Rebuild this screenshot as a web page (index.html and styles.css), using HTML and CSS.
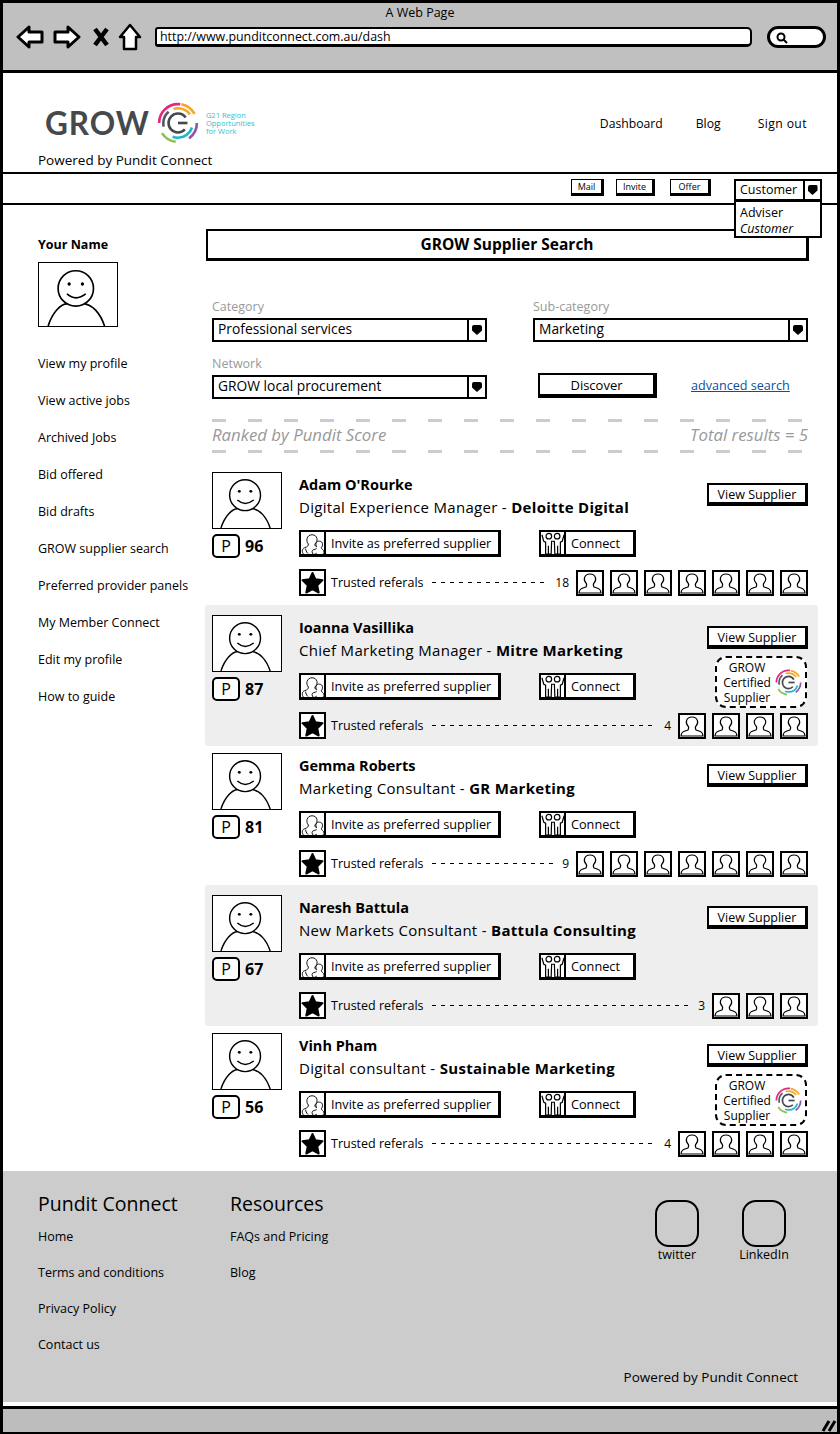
FILE: index.html
```html
<!DOCTYPE html>
<html lang="en">
<head>
<meta charset="UTF-8" />
<meta name="viewport" content="width=device-width, initial-scale=1.0" />
<title>A Web Page</title>
<link rel="stylesheet" href="styles.css">
</head>
<body>

<!-- shared icons -->
<svg class="defs" width="0" height="0" aria-hidden="true">
  <symbol id="face" viewBox="0 0 70 57">
    <circle cx="33" cy="23" r="16" fill="none" stroke="#000" stroke-width="1.5"/>
    <circle cx="27" cy="19" r="1.5"/>
    <circle cx="39" cy="19" r="1.5"/>
    <path d="M25 28 Q33 35 42 28" fill="none" stroke="#000" stroke-width="1.5"/>
    <path d="M8 57 C12 44 20 37 25 37 M41 37 C48 38 55 45 59 57" fill="none" stroke="#000" stroke-width="1.5"/>
  </symbol>
  <symbol id="member" viewBox="0 0 24 22">
    <path d="M1 21 C1 17 4 16 8 15 C9 13 9 12 8 11 C5 8 6 2 12 2 C18 2 19 8 16 11 C15 12 15 13 16 15 C20 16 23 17 23 21 Z" fill="none" stroke="#000" stroke-width="1.200"/>
  </symbol>
  <symbol id="star" viewBox="0 0 24 24">
    <path d="M12 2 L15 8.500 L22.500 9.500 L17 15 L18.500 22.500 L12 19 L5.500 22.500 L7 15 L1.500 9.500 L9 8.500 Z" stroke="#000" stroke-width="2" stroke-linejoin="round"/>
  </symbol>
  <symbol id="group" viewBox="0 0 26 26">
    <g fill="none" stroke="#000" stroke-width="1">
      <path d="M8 13 C5 10 6 3 12 3 C18 3 19 10 15 13 C15 15 16 16 17 16"/>
      <path d="M8 13 C8 15 7 16 4 17 C1 18 1 21 2 23 C3 25 6 25 8 24 C10 25 15 25 17 23"/>
      <path d="M17 16 C15 13 17 9 20 10 C24 10 24 15 22 17 C22 19 25 19 25 22 C25 25 20 25 17 25 C14 25 12 24 12 21 C12 19 15 19 17 18"/>
      <path d="M5 18 C5 20 6 21 7 23"/>
    </g>
  </symbol>
  <symbol id="pair" viewBox="0 0 26 26">
    <g fill="none" stroke="#000" stroke-width="1.300">
      <circle cx="8.500" cy="4.500" r="3"/>
      <circle cx="17.500" cy="4.500" r="3"/>
      <path d="M1 3 L3 10 L5 11 L5 24 L11 24 L11.500 10 L14.500 10 L15 24 L21 24 L21 11 L23 10 L25 3"/>
      <path d="M8 15 L8 24 M18 15 L18 24"/>
    </g>
  </symbol>
  <symbol id="ring" viewBox="0 0 40 40">
    <g fill="none" stroke-width="2.500">
      <circle cx="20" cy="20" r="18" pathLength="100" stroke="#e6267c" stroke-dasharray="27 73" stroke-dashoffset="-50"/>
      <circle cx="20" cy="20" r="18" pathLength="100" stroke="#f7a823" stroke-dasharray="14 86" stroke-dashoffset="-78"/>
      <circle cx="20" cy="20" r="18" pathLength="100" stroke="#8e56a8" stroke-dasharray="15 85" stroke-dashoffset="0"/>
      <circle cx="20" cy="20" r="18" pathLength="100" stroke="#8cc152" stroke-dasharray="14 86" stroke-dashoffset="-27"/>
      <circle cx="20" cy="20" r="14" pathLength="100" stroke="#21b6cf" stroke-dasharray="26 74" stroke-dashoffset="-5"/>
      <circle cx="20" cy="20" r="14" pathLength="100" stroke="#f7a823" stroke-dasharray="20 80" stroke-dashoffset="-70"/>
      <circle cx="20" cy="20" r="14" pathLength="100" stroke="#555a60" stroke-dasharray="18 82" stroke-dashoffset="-46"/>
      <circle cx="20" cy="20" r="9" pathLength="100" stroke="#45494e" stroke-dasharray="78 22" stroke-dashoffset="-12"/>
      <path d="M20 20 H29" stroke="#45494e"/>
    </g>
  </symbol>
</svg>

<div class="window">

  <!-- browser bar -->
  <div class="chrome">
    <div class="chrome-title">A Web Page</div>
    <div class="chrome-tools">
      <svg class="tool" width="28" height="26" viewBox="0 0 28 26"><path d="M2 13 L13 3 L13 8 L26 8 L26 18 L13 18 L13 23 Z" fill="#fff" stroke="#000" stroke-width="3" stroke-linejoin="round"/></svg>
      <svg class="tool" width="28" height="26" viewBox="0 0 28 26"><path d="M26 13 L15 3 L15 8 L2 8 L2 18 L15 18 L15 23 Z" fill="#fff" stroke="#000" stroke-width="3" stroke-linejoin="round"/></svg>
      <svg class="tool tool-x" width="16" height="20" viewBox="0 0 16 20"><path d="M2 2 L14 18 M14 2 L2 18" stroke="#000" stroke-width="4.500"/></svg>
      <svg class="tool tool-home" width="24" height="28" viewBox="0 0 24 28"><path d="M12 2 L22 14 L18 14 L18 26 L6 26 L6 14 L2 14 Z" fill="#fff" stroke="#000" stroke-width="2.500" stroke-linejoin="round"/></svg>
      <div class="url">http://www.punditconnect.com.au/dash</div>
      <div class="search">
        <svg width="12" height="12" viewBox="0 0 12 12"><circle cx="5" cy="5" r="3.500" fill="none" stroke="#000" stroke-width="2"/><path d="M7.500 7.500 L11 11" stroke="#000" stroke-width="2"/></svg>
      </div>
    </div>
  </div>

  <!-- site header -->
  <header class="site-head">
    <div class="brand">
      <div class="logo">
        <span class="logo-word">GROW</span>
        <svg class="logo-ring" width="42" height="42"><use href="#ring"/></svg>
        <span class="logo-sub">G21 Region<br>Opportunities<br>for Work</span>
      </div>
      <div class="powered">Powered by Pundit Connect</div>
    </div>
    <nav class="site-nav">
      <a href="#dashboard">Dashboard</a>
      <a href="#blog">Blog</a>
      <a href="#signout">Sign out</a>
    </nav>
  </header>

  <div class="toolbar">
    <button class="mini mini-mail">Mail</button>
    <button class="mini mini-invite">Invite</button>
    <button class="mini mini-offer">Offer</button>
    <div class="role">
      <div class="role-value"><span>Customer</span><b class="arrow"></b></div>
      <div class="role-menu">
        <div>Adviser</div>
        <div class="role-current">Customer</div>
      </div>
    </div>
  </div>

  <div class="main">

    <aside class="side">
      <div class="side-name">Your Name</div>
      <svg class="side-face" width="80" height="65"><use href="#face"/></svg>
      <a href="#profile">View my profile</a>
      <a href="#active">View active jobs</a>
      <a href="#archived">Archived Jobs</a>
      <a href="#offered">Bid offered</a>
      <a href="#drafts">Bid drafts</a>
      <a href="#search">GROW supplier search</a>
      <a href="#panels">Preferred provider panels</a>
      <a href="#member">My Member Connect</a>
      <a href="#edit">Edit my profile</a>
      <a href="#guide">How to guide</a>
    </aside>

    <div class="content">
      <h1 class="page-title">GROW Supplier Search</h1>

      <div class="filters">
        <div class="field">
          <label>Category</label>
          <div class="select"><span>Professional services</span><b class="arrow"></b></div>
        </div>
        <div class="field">
          <label>Sub-category</label>
          <div class="select"><span>Marketing</span><b class="arrow"></b></div>
        </div>
        <div class="field">
          <label>Network</label>
          <div class="select"><span>GROW local procurement</span><b class="arrow"></b></div>
        </div>
        <div class="discover">
          <button class="discover-btn">Discover</button>
          <a class="advanced" href="#advanced">advanced search</a>
        </div>
      </div>

      <div class="rank">
        <span>Ranked by Pundit Score</span>
        <span>Total results = 5</span>
      </div>

      <!-- results -->
      <div class="result result-first">
        <div class="result-left">
          <svg class="face" width="70" height="57"><use href="#face"/></svg>
          <div class="score"><span class="score-p">P</span><b>96</b></div>
        </div>
        <div class="result-main">
          <div class="who">
            <div class="who-name">Adam O'Rourke</div>
            <div class="who-job">Digital Experience Manager - <b>Deloitte Digital</b></div>
          </div>
          <div class="actions">
            <button class="act act-invite"><svg width="24" height="24"><use href="#group"/></svg><span>Invite as preferred supplier</span></button>
            <button class="act act-connect"><svg width="24" height="24"><use href="#pair"/></svg><span>Connect</span></button>
          </div>
          <div class="right-col"><button class="view">View Supplier</button></div>
          <div class="refs">
            <span class="ref-star"><svg width="23" height="23"><use href="#star"/></svg></span>
            <span class="ref-label">Trusted referals</span>
            <span class="ref-dash"></span>
            <span class="ref-count">18</span>
            <span class="ref-people">
              <i><svg width="24" height="22"><use href="#member"/></svg></i>
              <i><svg width="24" height="22"><use href="#member"/></svg></i>
              <i><svg width="24" height="22"><use href="#member"/></svg></i>
              <i><svg width="24" height="22"><use href="#member"/></svg></i>
              <i><svg width="24" height="22"><use href="#member"/></svg></i>
              <i><svg width="24" height="22"><use href="#member"/></svg></i>
              <i><svg width="24" height="22"><use href="#member"/></svg></i>
            </span>
          </div>
        </div>
      </div>

      <div class="result result-alt">
        <div class="result-left">
          <svg class="face" width="70" height="57"><use href="#face"/></svg>
          <div class="score"><span class="score-p">P</span><b>87</b></div>
        </div>
        <div class="result-main">
          <div class="who">
            <div class="who-name">Ioanna Vasillika</div>
            <div class="who-job">Chief Marketing Manager - <b>Mitre Marketing</b></div>
          </div>
          <div class="actions">
            <button class="act act-invite"><svg width="24" height="24"><use href="#group"/></svg><span>Invite as preferred supplier</span></button>
            <button class="act act-connect"><svg width="24" height="24"><use href="#pair"/></svg><span>Connect</span></button>
          </div>
          <div class="right-col">
            <button class="view">View Supplier</button>
            <div class="badge">
              <span>GROW<br>Certified<br>Supplier</span>
              <svg width="27" height="27"><use href="#ring"/></svg>
            </div>
          </div>
          <div class="refs">
            <span class="ref-star"><svg width="23" height="23"><use href="#star"/></svg></span>
            <span class="ref-label">Trusted referals</span>
            <span class="ref-dash"></span>
            <span class="ref-count">4</span>
            <span class="ref-people">
              <i><svg width="24" height="22"><use href="#member"/></svg></i>
              <i><svg width="24" height="22"><use href="#member"/></svg></i>
              <i><svg width="24" height="22"><use href="#member"/></svg></i>
              <i><svg width="24" height="22"><use href="#member"/></svg></i>
            </span>
          </div>
        </div>
      </div>

      <div class="result">
        <div class="result-left">
          <svg class="face" width="70" height="57"><use href="#face"/></svg>
          <div class="score"><span class="score-p">P</span><b>81</b></div>
        </div>
        <div class="result-main">
          <div class="who">
            <div class="who-name">Gemma Roberts</div>
            <div class="who-job">Marketing Consultant - <b>GR Marketing</b></div>
          </div>
          <div class="actions">
            <button class="act act-invite"><svg width="24" height="24"><use href="#group"/></svg><span>Invite as preferred supplier</span></button>
            <button class="act act-connect"><svg width="24" height="24"><use href="#pair"/></svg><span>Connect</span></button>
          </div>
          <div class="right-col"><button class="view">View Supplier</button></div>
          <div class="refs">
            <span class="ref-star"><svg width="23" height="23"><use href="#star"/></svg></span>
            <span class="ref-label">Trusted referals</span>
            <span class="ref-dash"></span>
            <span class="ref-count">9</span>
            <span class="ref-people">
              <i><svg width="24" height="22"><use href="#member"/></svg></i>
              <i><svg width="24" height="22"><use href="#member"/></svg></i>
              <i><svg width="24" height="22"><use href="#member"/></svg></i>
              <i><svg width="24" height="22"><use href="#member"/></svg></i>
              <i><svg width="24" height="22"><use href="#member"/></svg></i>
              <i><svg width="24" height="22"><use href="#member"/></svg></i>
              <i><svg width="24" height="22"><use href="#member"/></svg></i>
            </span>
          </div>
        </div>
      </div>

      <div class="result result-alt">
        <div class="result-left">
          <svg class="face" width="70" height="57"><use href="#face"/></svg>
          <div class="score"><span class="score-p">P</span><b>67</b></div>
        </div>
        <div class="result-main">
          <div class="who">
            <div class="who-name">Naresh Battula</div>
            <div class="who-job">New Markets Consultant - <b>Battula Consulting</b></div>
          </div>
          <div class="actions">
            <button class="act act-invite"><svg width="24" height="24"><use href="#group"/></svg><span>Invite as preferred supplier</span></button>
            <button class="act act-connect"><svg width="24" height="24"><use href="#pair"/></svg><span>Connect</span></button>
          </div>
          <div class="right-col"><button class="view">View Supplier</button></div>
          <div class="refs">
            <span class="ref-star"><svg width="23" height="23"><use href="#star"/></svg></span>
            <span class="ref-label">Trusted referals</span>
            <span class="ref-dash"></span>
            <span class="ref-count">3</span>
            <span class="ref-people">
              <i><svg width="24" height="22"><use href="#member"/></svg></i>
              <i><svg width="24" height="22"><use href="#member"/></svg></i>
              <i><svg width="24" height="22"><use href="#member"/></svg></i>
            </span>
          </div>
        </div>
      </div>

      <div class="result">
        <div class="result-left">
          <svg class="face" width="70" height="57"><use href="#face"/></svg>
          <div class="score"><span class="score-p">P</span><b>56</b></div>
        </div>
        <div class="result-main">
          <div class="who">
            <div class="who-name">Vinh Pham</div>
            <div class="who-job">Digital consultant - <b>Sustainable Marketing</b></div>
          </div>
          <div class="actions">
            <button class="act act-invite"><svg width="24" height="24"><use href="#group"/></svg><span>Invite as preferred supplier</span></button>
            <button class="act act-connect"><svg width="24" height="24"><use href="#pair"/></svg><span>Connect</span></button>
          </div>
          <div class="right-col">
            <button class="view">View Supplier</button>
            <div class="badge">
              <span>GROW<br>Certified<br>Supplier</span>
              <svg width="27" height="27"><use href="#ring"/></svg>
            </div>
          </div>
          <div class="refs">
            <span class="ref-star"><svg width="23" height="23"><use href="#star"/></svg></span>
            <span class="ref-label">Trusted referals</span>
            <span class="ref-dash"></span>
            <span class="ref-count">4</span>
            <span class="ref-people">
              <i><svg width="24" height="22"><use href="#member"/></svg></i>
              <i><svg width="24" height="22"><use href="#member"/></svg></i>
              <i><svg width="24" height="22"><use href="#member"/></svg></i>
              <i><svg width="24" height="22"><use href="#member"/></svg></i>
            </span>
          </div>
        </div>
      </div>

    </div>
  </div>

  <!-- footer -->
  <footer class="foot">
    <div class="foot-cols">
      <div class="foot-col foot-col-first">
        <h3>Pundit Connect</h3>
        <a href="#home">Home</a>
        <a href="#terms">Terms and conditions</a>
        <a href="#privacy">Privacy Policy</a>
        <a href="#contact">Contact us</a>
      </div>
      <div class="foot-col">
        <h3>Resources</h3>
        <a href="#faq">FAQs and Pricing</a>
        <a href="#blog">Blog</a>
      </div>
      <div class="social">
        <div class="social-item"><div class="social-box"></div><span>twitter</span></div>
        <div class="social-item"><div class="social-box"></div><span>LinkedIn</span></div>
      </div>
    </div>
    <div class="foot-power">Powered by Pundit Connect</div>
  </footer>

  <div class="status">
    <svg width="16" height="14" viewBox="0 0 16 14"><path d="M2 13 L8 3 M8 13 L14 3" stroke="#000" stroke-width="3"/></svg>
  </div>

</div>

</body>
</html>
```

FILE: styles.css
```css
* {
  box-sizing: border-box;
}
body {
  margin: 0;
  font-family: "Open Sans", Arial, sans-serif;
  font-size: 13px;
  color: #000;
  background: #fff;
}
a {
  color: #000;
  text-decoration: none;
}
button {
  font-family: inherit;
  color: #000;
  background: #fff;
  padding: 0;
}
.defs {
  position: absolute;
}
.window {
  width: 840px;
  height: 1434px;
  display: flex;
  flex-direction: column;
  border: solid #000;
  border-width: 3px 3px 2px 3px;
  overflow: hidden;
}

/* browser bar */
.chrome {
  height: 70px;
  flex: none;
  background: #c0c0c0;
  border-bottom: 3px solid #000;
}
.chrome-title {
  text-align: center;
  font-size: 12.500px;
  line-height: 16px;
  padding-top: 2px;
}
.chrome-tools {
  display: flex;
  align-items: center;
  padding-left: 13px;
  margin-top: 2px;
}
.tool {
  margin-right: 9px;
}
.tool-x {
  margin-left: 3px;
}
.url {
  width: 597px;
  height: 20px;
  margin-left: 4px;
  padding-left: 3px;
  background: #fff;
  border: 2px solid #000;
  border-bottom-width: 3px;
  border-radius: 3px 5px 5px 3px;
  font-size: 12.400px;
  line-height: 15px;
}
.search {
  width: 59px;
  height: 22px;
  margin-left: 15px;
  padding: 3px 0 0 6px;
  background: #fff;
  border: 3px solid #000;
  border-radius: 12px;
}
.search svg {
  display: block;
}

/* header */
.site-head {
  height: 99px;
  flex: none;
  display: flex;
  justify-content: space-between;
  padding: 28px 30px 0 35px;
}
.logo {
  display: flex;
  align-items: center;
  height: 44px;
  padding-left: 7px;
}
.logo-word {
  font-family: Lato, sans-serif;
  font-weight: 700;
  font-size: 31.500px;
  letter-spacing: 1px;
  color: #45494e;
}
.logo-ring {
  margin-left: 7px;
}
.logo-sub {
  margin-left: 7px;
  font-size: 7.500px;
  line-height: 8px;
  color: #31bfd0;
}
.powered {
  margin-top: 6px;
  font-size: 13.500px;
  line-height: 18px;
}
.site-nav {
  display: flex;
  gap: 33px;
  padding-top: 14px;
  font-size: 12.200px;
}
.site-nav a:last-child {
  margin-left: 4px;
  letter-spacing: 0.400px;
}
.toolbar {
  height: 33px;
  flex: none;
  display: flex;
  align-items: flex-start;
  padding: 5px 0 0 568px;
  border-top: 2px solid #000;
  border-bottom: 2px solid #000;
}
.mini {
  height: 17px;
  padding-top: 1px;
  font-size: 9px;
  line-height: 12px;
  border: 1.500px solid #000;
  border-right-width: 3px;
  border-bottom-width: 3px;
}
.mini-mail {
  width: 33px;
  margin-right: 12px;
}
.mini-invite {
  width: 39px;
  margin-right: 15px;
}
.mini-offer {
  width: 41px;
  margin-right: 23px;
}
.role {
  position: relative;
  width: 88px;
}
.role-value {
  display: flex;
  height: 22px;
  border: 2px solid #000;
  font-size: 12.500px;
  line-height: 17px;
}
.role-value span {
  flex: 1;
  padding-left: 4px;
}
.role-value .arrow {
  width: 17px;
}
.role-menu {
  position: absolute;
  top: 21px;
  left: 0;
  width: 88px;
  height: 38px;
  padding: 3px 4px;
  background: #fff;
  border: 2px solid #000;
  font-size: 12.500px;
  line-height: 16px;
  z-index: 2;
}
.role-current {
  font-style: italic;
}
.arrow {
  flex: none;
  display: flex;
  align-items: center;
  justify-content: center;
  border-left: 2px solid #000;
  background: #fff;
}
.arrow::after {
  content: "";
  width: 10px;
  height: 10px;
  background: #000;
  border-radius: 2px 2px 0 0;
  clip-path: polygon(0 0, 100% 0, 100% 55%, 50% 100%, 0 55%);
}

/* sidebar */
.main {
  height: 966px;
  flex: none;
  display: flex;
}
.side {
  width: 202px;
  flex: none;
  padding: 31px 0 0 35px;
}
.side-name {
  font-weight: 700;
  font-size: 12.500px;
  line-height: 18px;
}
.side-face {
  display: block;
  margin: 8px 0 23px;
  border: 1px solid #000;
}
.side a {
  display: block;
  height: 37px;
  font-size: 12.500px;
  line-height: 28px;
}

/* content */
.content {
  width: 613px;
  flex: none;
  padding-top: 24px;
}
.page-title {
  width: 603px;
  height: 32px;
  margin: 0 0 0 1px;
  border: 2px solid #000;
  border-right-width: 3px;
  border-bottom-width: 3px;
  font-size: 15.500px;
  line-height: 27px;
  text-align: center;
}
.filters {
  display: grid;
  grid-template-columns: 275px 275px;
  column-gap: 46px;
  row-gap: 13px;
  margin: 37px 0 0 7px;
}
.field label {
  display: block;
  height: 16px;
  margin-bottom: 4px;
  font-size: 12.500px;
  line-height: 18px;
  color: #999;
}
.select {
  display: flex;
  height: 24px;
  border: 2px solid #000;
  font-size: 13.800px;
  line-height: 18px;
}
.select span {
  flex: 1;
  padding-left: 4px;
}
.select .arrow {
  width: 18px;
}
.discover {
  display: flex;
  align-items: flex-start;
  padding: 18px 0 0 5px;
}
.discover-btn {
  width: 119px;
  height: 25px;
  font-size: 13px;
  border: 2px solid #000;
  border-right-width: 4px;
  border-bottom-width: 4px;
}
.advanced {
  margin: 4px 0 0 34px;
  font-size: 12.600px;
  color: #0b4f9e;
  text-decoration: underline;
}
.rank {
  display: flex;
  justify-content: space-between;
  height: 34px;
  margin: 20px 10px 12px 7px;
  padding-top: 4px;
  font-size: 16.800px;
  line-height: 24px;
  font-style: italic;
  color: #999;
  background-image: repeating-linear-gradient(90deg, #ccc 0 14px, transparent 14px 36px), repeating-linear-gradient(90deg, #ccc 0 14px, transparent 14px 36px);
  background-size: 100% 3px;
  background-position: top, bottom;
  background-repeat: no-repeat;
}

/* result rows */
.result {
  height: 139px;
  display: flex;
  padding: 7px 10px 0 7px;
}
.result-first {
  height: 140px;
}
.result-alt {
  height: 141px;
  padding-top: 10px;
  background: #eee;
  border-radius: 3px;
}
.result-left {
  width: 87px;
  flex: none;
}
.face {
  display: block;
  background: #fff;
  border: 1px solid #000;
}
.score {
  display: flex;
  align-items: center;
  gap: 5px;
  margin-top: 5px;
  font-size: 16px;
}
.score-p {
  width: 28px;
  height: 24px;
  text-align: center;
  line-height: 20px;
  background: #fff;
  border: 2px solid #000;
  border-radius: 5px;
}
.result-main {
  flex: 1;
  display: grid;
  grid-template-columns: 1fr 101px;
  grid-template-rows: 58px 39px 27px;
}
.who-name {
  height: 24px;
  font-weight: 700;
  font-size: 14.500px;
  line-height: 26px;
}
.who-job {
  font-size: 15px;
  line-height: 23px;
  letter-spacing: 0.300px;
}
.who-job b {
  font-weight: 700;
}
.actions {
  display: flex;
  gap: 38px;
  align-items: flex-start;
  grid-column: 1;
  grid-row: 2;
}
.act {
  display: flex;
  align-items: stretch;
  height: 27px;
  font-size: 12.700px;
  border: 2px solid #000;
  border-right-width: 3px;
  border-bottom-width: 3px;
}
.act svg {
  flex: none;
  margin-right: -1px;
}
.act span {
  flex: 1;
  border-left: 2px solid #000;
  text-align: left;
  padding-left: 5px;
  line-height: 23px;
}
.act-invite {
  width: 202px;
}
.act-connect {
  width: 97px;
}
.right-col {
  grid-column: 2;
  grid-row: 1 / 3;
  padding-top: 11px;
}
.view {
  display: block;
  width: 101px;
  height: 23px;
  padding-top: 1px;
  font-size: 12.500px;
  border: 2px solid #000;
  border-right-width: 3px;
  border-bottom-width: 4px;
}
.badge {
  display: flex;
  align-items: center;
  width: 92px;
  height: 52px;
  margin: 7px 0 0 8px;
  padding: 0 3px 0 2px;
  background: #fff;
  border: 2px dashed #000;
  border-radius: 11px;
  font-size: 12px;
  line-height: 15px;
  text-align: center;
}
.badge span {
  flex: 1;
}
.refs {
  grid-column: 1 / 3;
  grid-row: 3;
  display: flex;
  align-items: center;
}
.ref-star {
  width: 27px;
  height: 27px;
  flex: none;
  display: flex;
  align-items: center;
  justify-content: center;
  background: #fff;
  border: 2px solid #000;
}
.ref-label {
  margin-left: 5px;
  font-size: 12.500px;
}
.ref-dash {
  flex: 1;
  height: 1.500px;
  margin: 0 9px 0 8px;
  background-image: repeating-linear-gradient(90deg, #000 0 4px, transparent 4px 9px);
}
.ref-count {
  font-size: 12px;
  margin-right: 7px;
}
.ref-people {
  display: flex;
  gap: 6px;
}
.ref-people i {
  width: 28px;
  height: 26px;
  display: flex;
  align-items: center;
  justify-content: center;
  background: #fff;
  border: 2px solid #000;
}

/* footer */
.foot {
  height: 231px;
  flex: none;
  margin: 0 -1px;
  padding: 20px 38px 0 36px;
  background: #ccc;
}
.foot-cols {
  display: flex;
}
.foot-col {
  width: 192px;
}
.foot-col h3 {
  margin: 0;
  font-size: 19.500px;
  font-weight: 400;
  line-height: 26px;
}
.foot-col a {
  display: block;
  height: 36px;
  font-size: 12.500px;
  line-height: 18px;
}
.foot-col h3 + a {
  margin-top: 11px;
}
.social {
  display: flex;
  gap: 37px;
  margin-left: auto;
  margin-right: 11px;
}
.social-item {
  width: 50px;
  display: flex;
  flex-direction: column;
  align-items: center;
  font-size: 12.500px;
  line-height: 14px;
}
.social-box {
  width: 44px;
  height: 47px;
  margin: 9px 0 1px;
  border: 2px solid #000;
  border-radius: 14px;
}
.foot-power {
  margin: -4px 2px 0 0;
  text-align: right;
  font-size: 13.500px;
  line-height: 18px;
}
.status {
  flex: 1;
  display: flex;
  align-items: flex-end;
  justify-content: flex-end;
  margin-top: 4px;
  background: #bdbdbd;
  border-top: 3px solid #000;
}
```
